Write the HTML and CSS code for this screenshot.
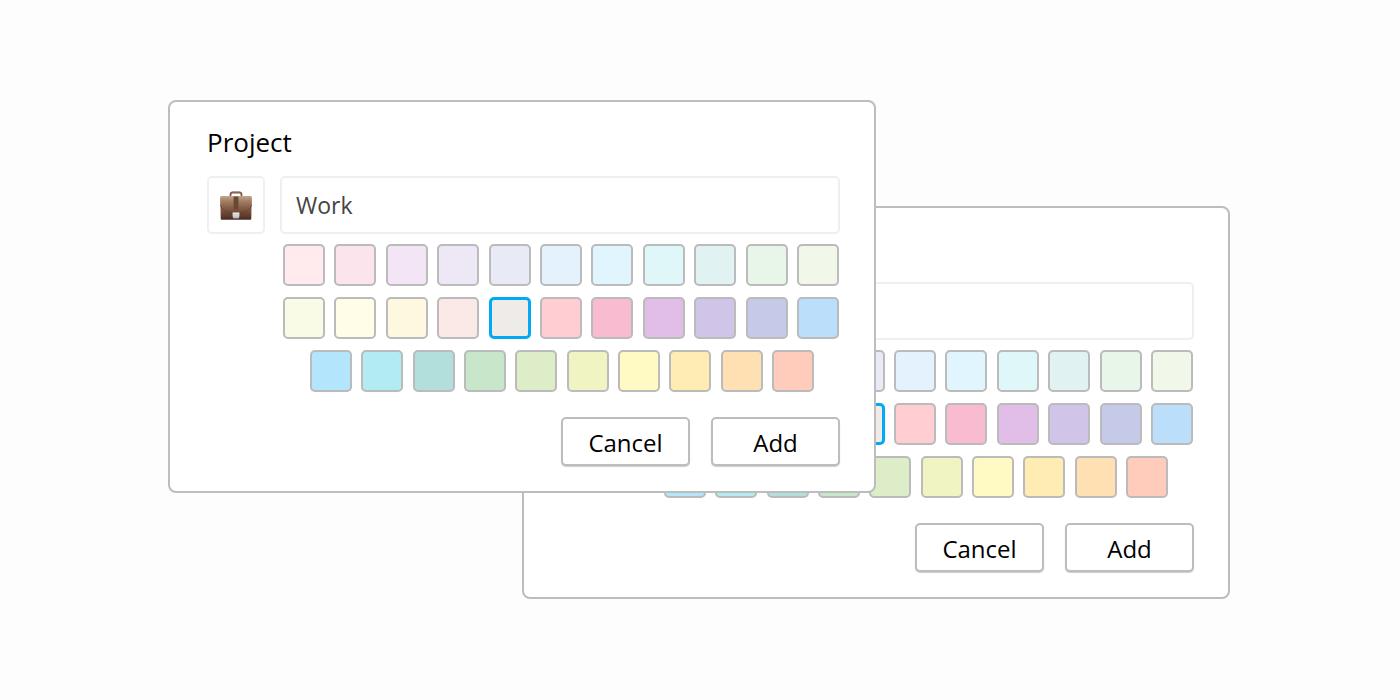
FILE: index.html
```html
<!DOCTYPE html>
<html lang="en">
<head>
<meta charset="utf-8">
<meta name="viewport" content="width=device-width, initial-scale=1">
<title>Project</title>
<link rel="stylesheet" href="styles.css">
</head>
<body>
<main class="stage">
  <form class="dialog dialog-back"></form>
  <form class="dialog dialog-front"></form>
</main>
<template id="dialog-content">
  <label class="title">Project</label>
  <div class="fields">
    <button type="button" class="icon-button" aria-label="Choose icon">
      <svg class="briefcase" viewBox="0 0 32 30" aria-hidden="true">
        <defs>
          <linearGradient id="leather" x1="0" y1="0" x2="0" y2="1">
            <stop offset="0" stop-color="#b29078"/>
            <stop offset=".25" stop-color="#987157"/>
            <stop offset=".65" stop-color="#79513c"/>
            <stop offset="1" stop-color="#4a2c22"/>
          </linearGradient>
          <linearGradient id="flap" x1="0" y1="0" x2="0" y2="1">
            <stop offset="0" stop-color="#c0a48e"/>
            <stop offset=".3" stop-color="#a27c62"/>
            <stop offset="1" stop-color="#68412e"/>
          </linearGradient>
          <linearGradient id="clasp" x1="0" y1="0" x2="0" y2="1">
            <stop offset="0" stop-color="#f4f4f4"/>
            <stop offset="1" stop-color="#b9b7b6"/>
          </linearGradient>
        </defs>
        <path d="M10.500 6.400V4.600Q10.500 2.500 12.800 2.500H19.200Q21.500 2.500 21.500 4.600V6.400" fill="none" stroke="#7d5540" stroke-width="1.800"/>
        <path d="M11.500 2.300Q12 2 13 2H19Q20 2 20.500 2.300" fill="none" stroke="#a5826c" stroke-width=".7"/>
        <path d="M1.500 6.200H30.500Q31.700 6.200 31.700 7.500L31.300 28.500Q31.300 29.500 30.300 29.500H1.700Q.7 29.500 .7 28.500L.3 7.500Q.3 6.200 1.500 6.200Z" fill="url(#leather)"/>
        <path d="M.3 8Q.3 6.200 1.500 6.200H30.500Q31.700 6.200 31.700 8V15C30.500 21 24 24 16 24S1.500 21 .4 15Z" fill="url(#flap)"/>
        <path d="M.5 15C2 21 8 24 16 24S30 21 31.500 15" fill="none" stroke="#54352a" stroke-width=".6"/>
        <path d="M13.600 6.500H18.400V19.500H13.600Z" fill="#6b4836"/>
        <path d="M12.600 22.600H19.400V25.500Q19.300 28.400 18.300 28.400H13.700Q12.700 28.400 12.600 25.500Z" fill="url(#clasp)"/>
        <path d="M12.600 24.400H19.400" stroke="#b5b2b0" stroke-width=".4"/>
        <path d="M1 29.200H31" stroke="#38211b" stroke-width=".6"/>
      </svg>
    </button>
    <input class="name" type="text" value="Work">
  </div>
  <div class="palette" role="radiogroup" aria-label="Color"></div>
  <div class="actions">
    <button type="button" class="action">Cancel</button>
    <button type="button" class="action">Add</button>
  </div>
</template>
<script src="script.js"></script>
</body>
</html>
```
FILE: styles.css
```css
* {
  box-sizing: border-box;
}

body {
  margin: 0;
  min-height: 100vh;
  padding: 0 2px 2px 0;
  display: flex;
  align-items: center;
  justify-content: center;
  background: #fdfdfd;
  color: #000;
  font-family: "Open Sans", "Noto Sans", sans-serif;
}

.stage {
  width: 100%;
  max-width: 1062px;
  display: grid;
  grid-template-columns: repeat(3, 1fr);
  grid-template-rows: 106px auto 106px;
}

.dialog {
  padding: 22px 34px 25px 37px;
  border: 2px solid #bdbdbd;
  border-radius: 8px;
  background: #fff;
}

.dialog-front {
  grid-area: 1 / 1 / 3 / 3;
  z-index: 1;
}

.dialog-back {
  grid-area: 2 / 2 / 4 / 4;
}

.title {
  display: block;
  margin-bottom: 16px;
  font-size: 26px;
  line-height: 36px;
}

.fields {
  display: flex;
  gap: 15px;
}

.icon-button,
.name {
  height: 58px;
  border: 2px solid #efefef;
  border-radius: 5px;
  background: #fff;
}

.icon-button {
  width: 58px;
  flex: none;
  display: flex;
  align-items: center;
  justify-content: center;
  padding: 0;
}

.briefcase {
  width: 32px;
  height: 30px;
}

.name {
  flex: 1;
  min-width: 0;
  padding: 0 14px;
  color: #444;
  font: inherit;
  font-size: 23px;
}

.palette {
  display: grid;
  gap: 11px;
  margin: 10px 1px 25px 76px;
}

.row {
  display: flex;
  justify-content: space-between;
}

.row-short {
  padding: 0 25px 0 27px;
}

.swatch {
  appearance: none;
  width: 42px;
  height: 42px;
  margin: 0;
  border: 2px solid #bbb;
  border-radius: 5px;
}

.swatch:checked {
  border: 3px solid #03a9f4;
}

.actions {
  display: flex;
  justify-content: flex-end;
  gap: 21px;
}

.action {
  width: 129px;
  height: 49px;
  padding: 2px 0 0;
  border: 2px solid #bdbdbd;
  border-radius: 5px;
  background: #fff;
  box-shadow: 0 1px 1px #ccc;
  color: #000;
  font: inherit;
  font-size: 24px;
}
```
FILE: script.js
```js
const rows = [
  ["#ffebee", "#fce4ec", "#f3e5f5", "#ede7f6", "#e8eaf6", "#e3f2fd", "#e1f5fe", "#e0f7fa", "#e0f2f1", "#e8f5e9", "#f1f8e9"],
  ["#f9fbe7", "#fffde7", "#fff8e1", "#fbe9e7", "#efebe9", "#ffcdd2", "#f8bbd0", "#e1bee7", "#d1c4e9", "#c5cae9", "#bbdefb"],
  ["#b3e5fc", "#b2ebf2", "#b2dfdb", "#c8e6c9", "#dcedc8", "#f0f4c3", "#fff9c4", "#ffecb3", "#ffe0b2", "#ffccbc"]
];
const template = document.getElementById("dialog-content");

document.querySelectorAll(".dialog").forEach((dialog, index) => {
  dialog.append(template.content.cloneNode(true));
  const nameId = `project-name-${index}`;
  dialog.querySelector(".name").id = nameId;
  dialog.querySelector(".title").htmlFor = nameId;
  // Gradient ids have to stay unique when the icon is repeated.
  dialog.querySelectorAll("linearGradient").forEach((gradient) => {
    const id = `${gradient.id}-${index}`;
    dialog.querySelectorAll(`[fill="url(#${gradient.id})"]`).forEach((shape) => shape.setAttribute("fill", `url(#${id})`));
    gradient.id = id;
  });

  const palette = dialog.querySelector(".palette");
  rows.forEach((colors) => {
    const row = document.createElement("div");
    row.className = colors.length < 11 ? "row row-short" : "row";
    colors.forEach((color) => {
      const swatch = document.createElement("input");
      swatch.type = "radio";
      swatch.name = "color";
      swatch.value = color;
      swatch.className = "swatch";
      swatch.style.backgroundColor = color;
      swatch.checked = color === "#efebe9";
      swatch.setAttribute("aria-label", color);
      row.append(swatch);
    });
    palette.append(row);
  });
});
```
